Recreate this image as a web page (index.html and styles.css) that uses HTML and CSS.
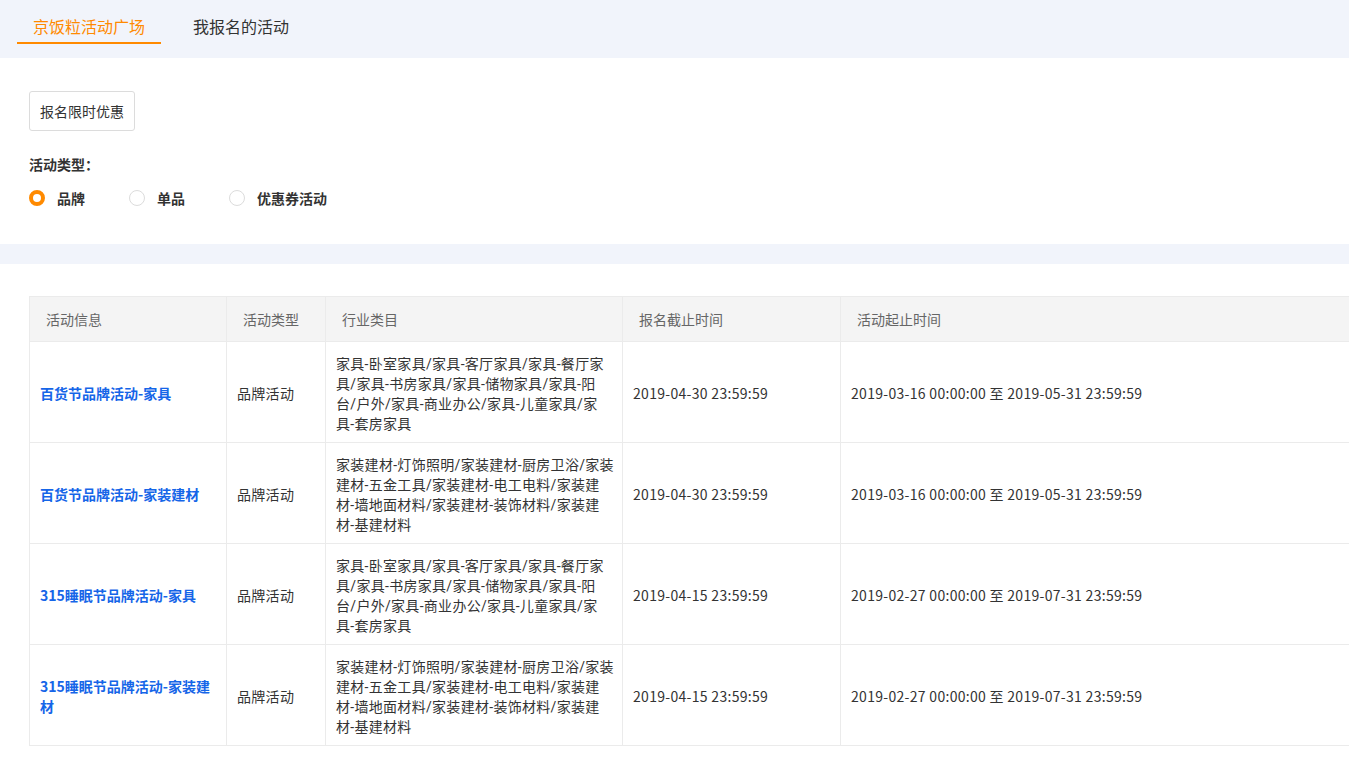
FILE: index.html
```html
<!DOCTYPE html>
<html lang="zh-CN">
<head>
<meta charset="utf-8">
<title>京饭粒活动广场</title>
<link rel="stylesheet" href="styles.css">
</head>
<body>
<div class="tabs">
  <div class="tab active">京饭粒活动广场</div>
  <div class="tab">我报名的活动</div>
</div>
<section class="filters">
  <button class="btn">报名限时优惠</button>
  <div class="label">活动类型：</div>
  <div class="radios">
    <label class="radio checked"><span class="dot"></span><span class="rtext">品牌</span></label>
    <label class="radio"><span class="dot"></span><span class="rtext">单品</span></label>
    <label class="radio"><span class="dot"></span><span class="rtext">优惠券活动</span></label>
  </div>
</section>
<div class="band"></div>
<section class="list">
  <table class="tbl">
    <colgroup>
      <col class="c1"><col class="c2"><col class="c3"><col class="c4"><col class="c5">
    </colgroup>
    <thead>
      <tr><th>活动信息</th><th>活动类型</th><th>行业类目</th><th>报名截止时间</th><th>活动起止时间</th></tr>
    </thead>
    <tbody>
      <tr>
        <td><a class="link">百货节品牌活动-家具</a></td>
        <td>品牌活动</td>
        <td class="cat">家具-卧室家具/家具-客厅家具/家具-餐厅家具/家具-书房家具/家具-储物家具/家具-阳台/户外/家具-商业办公/家具-儿童家具/家具-套房家具</td>
        <td>2019-04-30 23:59:59</td>
        <td>2019-03-16 00:00:00 至 2019-05-31 23:59:59</td>
      </tr>
      <tr>
        <td><a class="link">百货节品牌活动-家装建材</a></td>
        <td>品牌活动</td>
        <td class="cat">家装建材-灯饰照明/家装建材-厨房卫浴/家装建材-五金工具/家装建材-电工电料/家装建材-墙地面材料/家装建材-装饰材料/家装建材-基建材料</td>
        <td>2019-04-30 23:59:59</td>
        <td>2019-03-16 00:00:00 至 2019-05-31 23:59:59</td>
      </tr>
      <tr>
        <td><a class="link">315睡眠节品牌活动-家具</a></td>
        <td>品牌活动</td>
        <td class="cat">家具-卧室家具/家具-客厅家具/家具-餐厅家具/家具-书房家具/家具-储物家具/家具-阳台/户外/家具-商业办公/家具-儿童家具/家具-套房家具</td>
        <td>2019-04-15 23:59:59</td>
        <td>2019-02-27 00:00:00 至 2019-07-31 23:59:59</td>
      </tr>
      <tr>
        <td><a class="link">315睡眠节品牌活动-家装建材</a></td>
        <td>品牌活动</td>
        <td class="cat">家装建材-灯饰照明/家装建材-厨房卫浴/家装建材-五金工具/家装建材-电工电料/家装建材-墙地面材料/家装建材-装饰材料/家装建材-基建材料</td>
        <td>2019-04-15 23:59:59</td>
        <td>2019-02-27 00:00:00 至 2019-07-31 23:59:59</td>
      </tr>
    </tbody>
  </table>
</section>
</body>
</html>
```

FILE: styles.css
```css
* { box-sizing: border-box; }
html, body { margin: 0; padding: 0; }
body {
  font-family: "Noto Sans CJK SC", "Noto Sans", sans-serif;
  font-size: 14px;
  color: #333;
  background: #fff;
  overflow-x: hidden;
}
.tabs {
  height: 58px;
  background: #f1f4fb;
  display: flex;
  padding-left: 17px;
  gap: 16px;
}
.tab {
  font-size: 16px;
  line-height: 22px;
  padding: 15px 16px 5px;
  color: #333;
  border-bottom: 2px solid transparent;
  height: 44px;
}
.tab.active {
  color: #ff8a00;
  border-bottom-color: #ff8a00;
}
.filters {
  padding: 33px 29px 36px;
}
.btn {
  display: block;
  font-family: inherit;
  font-size: 14px;
  color: #333;
  background: #fff;
  border: 1px solid #dcdcdc;
  border-radius: 3px;
  height: 40px;
  padding: 0 10px;
  line-height: 38px;
}
.label {
  margin-top: 23px;
  font-weight: bold;
  line-height: 20px;
  font-size: 14px;
}
.radios {
  display: flex;
  margin-top: 14px;
  height: 20px;
  align-items: center;
}
.radio {
  display: flex;
  align-items: center;
  margin-right: 44px;
  font-weight: bold;
  font-size: 14px;
  line-height: 20px;
}
.dot {
  width: 16px;
  height: 16px;
  border-radius: 50%;
  border: 1px solid #dcdcdc;
  margin-right: 12px;
  background: #fff;
}
.radio.checked .dot {
  border: 4.5px solid #ff8a00;
}
.band {
  height: 20px;
  background: #f1f4fb;
}
.list {
  padding: 32px 0 0 29px;
}
.tbl {
  border-collapse: collapse;
  table-layout: fixed;
  width: 1400px;
}
.c1 { width: 197px; }
.c2 { width: 99px; }
.c3 { width: 297px; }
.c4 { width: 218px; }
.c5 { width: 589px; }
.tbl th, .tbl td {
  border: 1px solid #ebebeb;
  text-align: left;
  vertical-align: middle;
}
.tbl th {
  background: #f4f4f4;
  color: #666;
  font-weight: normal;
  height: 45px;
  padding: 0 16px;
  font-size: 14px;
}
.tbl td {
  padding: 11px 10px 9px;
  line-height: 20px;
  height: 101px;
  font-size: 14px;
  color: #333;
  letter-spacing: 0.3px;
}
.tbl td.cat {
  font-family: Roboto, "Noto Sans CJK SC", sans-serif;
  padding: 12px 7.5px 8px 10px;
}
.link {
  color: #1565e8;
  font-weight: bold;
  letter-spacing: 0;
  cursor: pointer;
}
```
